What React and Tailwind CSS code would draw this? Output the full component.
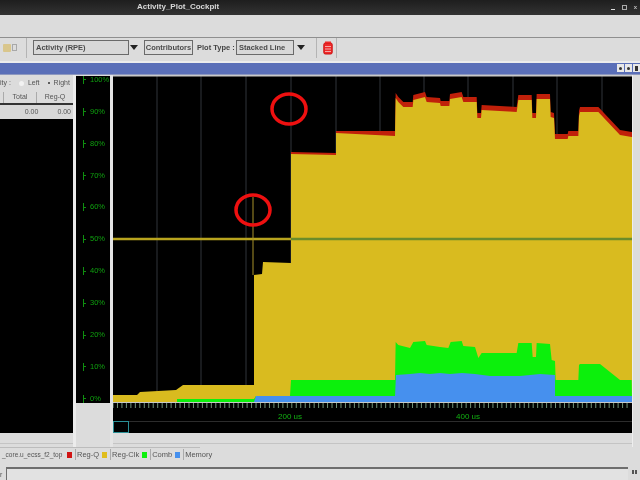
import { Fragment } from 'react'

const zx = (list) => list.map(([x, y]) => [380 + x / 3, y])

// stacked profiles, in page pixels so they can be read against the screenshot
const TOP = [
  [113, 396], [137, 396], [140, 393], [176, 391], [183, 386], [254, 386], [254, 276], [262, 275], [263, 263], [291, 262], [291, 153], [336, 154], [336, 132], [395, 132],
  ...zx([[47, 94], [55, 98], [70, 103], [98, 103], [100, 96], [135, 93], [140, 98], [180, 99], [182, 102], [208, 102], [210, 95], [245, 93], [250, 98], [290, 98], [292, 114], [303, 114], [305, 106], [410, 108], [415, 96], [455, 96], [457, 114], [468, 114], [470, 95], [510, 95], [512, 113], [522, 114], [525, 135], [563, 135], [565, 132], [595, 132], [597, 112], [600, 108], [655, 108], [720, 131], [755, 133]]),
  [632, 133],
]
const GREEN = [
  [177, 403], [177, 400], [254, 400], [256, 397], [290, 397], [291, 381], [395, 381],
  ...zx([[47, 343], [55, 346], [90, 349], [100, 343], [135, 342], [140, 346], [180, 348], [205, 349], [212, 343], [245, 342], [250, 347], [285, 348], [295, 359], [305, 354], [410, 354], [415, 344], [455, 344], [458, 358], [468, 358], [470, 344], [510, 345], [515, 361], [525, 362], [527, 381], [595, 381], [597, 366], [600, 365], [660, 365], [720, 381], [755, 381]]),
  [632, 403],
]
const BLUE = [
  [254, 403], [256, 397], [395, 397], [396, 376], [410, 375], [420, 374], [430, 375], [440, 374], [450, 375], [462, 374], [475, 375], [490, 377], [520, 377], [540, 375], [555, 376], [555, 397], [632, 397], [632, 403],
]

const pts = (list) => list.map((p) => p.join(',')).join(' ')
const closed = (list) => pts([...list, [list[list.length - 1][0], 403], [list[0][0], 403]])
// the red band is thin before the big step and thicker after it
const band = ([x, y]) => [x, y + (x < 291 ? 0 : x < 395 ? 2 : 5)]

const GRID = [157, 201, 246, 291, 336, 380, 424, 468, 513, 557, 602]
const PCT = ['100%', '90%', '80%', '70%', '60%', '50%', '40%', '30%', '20%', '10%', '0%']
const TICKS = Array.from({ length: 116 }, (_, i) => i * 4.47)

function Chart() {
  return (
    <svg viewBox="113 76 519 328" className="block h-[328px] w-[519px] bg-black">
      {GRID.map((x) => (
        <line key={x} x1={x} x2={x} y1="76" y2="403" stroke="#30343a" />
      ))}
      <polygon points={closed(TOP.slice(10))} fill="#c0200a" />
      <polygon points={closed(TOP.map(band))} fill="#d9bb1f" />
      <polygon points={closed(GREEN)} fill="#0cf00c" />
      <polygon points={pts(BLUE)} fill="#4690ee" />
      <line x1="113" x2="291" y1="240" y2="240" stroke="#b8a41e" strokeWidth="2.5" />
      <line x1="291" x2="632" y1="240" y2="240" stroke="#6b8c2a" strokeWidth="2.5" />
      <line x1="253" x2="253" y1="198" y2="276" stroke="#a8922a" />
      <ellipse cx="289" cy="110" rx="17" ry="15" fill="none" stroke="#ee1010" strokeWidth="3.5" />
      <ellipse cx="253" cy="211" rx="17" ry="15" fill="none" stroke="#ee1010" strokeWidth="3.5" />
      <rect x="113" y="76" width="519" height="1.5" fill="#c8c8c8" />
      <line x1="113" x2="632" y1="403.5" y2="403.5" stroke="#c8c8c8" />
    </svg>
  )
}

function TimeAxis() {
  return (
    <svg viewBox="0 0 519 30" className="block h-[30px] w-[519px] bg-black">
      {TICKS.map((x) => (
        <line key={x} x1={x} x2={x} y1="0" y2="5" stroke="#8fb898" strokeWidth="0.8" />
      ))}
      <line x1="0" x2="519" y1="18.5" y2="18.5" stroke="#2c2c2c" />
      <text x="177" y="16" textAnchor="middle" fontSize="8" fill="#12b012">200 us</text>
      <text x="355" y="16" textAnchor="middle" fontSize="8" fill="#12b012">400 us</text>
      <rect x="0.5" y="18.5" width="15" height="11" fill="none" stroke="#2a8f96" />
    </svg>
  )
}

function Combo({ label, width }) {
  return (
    <div className={`flex h-[15px] items-center border border-[#6a6a6a] bg-[#d8d8d8] pl-0.5 font-bold text-[#4a4a4a] ${width}`}>
      {label}
    </div>
  )
}

function Arrow() {
  return <div className="h-0 w-0 border-x-[4px] border-t-[5px] border-x-transparent border-t-[#222]" />
}

function Sep() {
  return <div className="h-[20px] w-px bg-[#b4b4b4]" />
}

function Toolbar() {
  return (
    <div className="flex h-[25px] items-center border-t border-[#8f8f8f] pb-[3px] text-[7.5px]">
      <div className="ml-[3px] flex w-[16px] items-center gap-px">
        <div className="h-[8px] w-[8px] rounded-[1px] bg-[#d9c68c]" />
        <div className="h-[7px] w-[5px] border border-[#a8a8a8]" />
      </div>
      <div className="ml-[7px]"><Sep /></div>
      <div className="ml-[6px]"><Combo label="Activity (RPE)" width="w-[96px]" /></div>
      <div className="ml-[1px]"><Arrow /></div>
      <div className="ml-[6px] flex h-[15px] w-[49px] items-center justify-center border border-[#6a6a6a] font-bold text-[#4a4a4a]">
        Contributors
      </div>
      <span className="ml-1 w-[39px] font-bold text-[#444]">Plot Type :</span>
      <Combo label="Stacked Line" width="w-[58px]" />
      <div className="ml-[3px]"><Arrow /></div>
      <div className="ml-[11px]"><Sep /></div>
      <svg viewBox="0 0 10 14" className="ml-[6px] h-[14px] w-[10px]">
        <rect x="0.8" y="2" width="8.4" height="11" rx="1.5" fill="#ee2a2a" stroke="#cc1111" />
        <rect x="2" y="0.5" width="6" height="1.5" fill="#ee2a2a" />
        <path d="M2 5.5h6M2 8h6M2 10.5h6" stroke="#f6c8c8" strokeWidth="0.8" />
      </svg>
      <div className="ml-[3px]"><Sep /></div>
    </div>
  )
}

function LeftPanel() {
  return (
    <div className="flex w-[76px] flex-col border-r-[3px] border-[#ececec] text-[7px] text-[#555]">
      <div className="flex h-[17px] items-center gap-1 overflow-hidden whitespace-nowrap">
        <span>ity :</span>
        <div className="ml-1 h-[5px] w-[5px] rounded-full bg-[#f2f2f2]" />
        <span>Left</span>
        <div className="ml-1 h-[2px] w-[2px] rounded-full bg-[#333]" />
        <span>Right</span>
      </div>
      <div className="flex h-[13px] items-center border-b-2 border-[#333]">
        <div className="h-full w-[4px] border-r border-[#aaa]" />
        <span className="w-[33px] border-r border-[#aaa] text-center">Total</span>
        <span className="flex-1 text-center">Reg-Q</span>
      </div>
      <div className="flex h-[14px] items-center justify-end gap-[19px] bg-[#d8d8d8] pr-0.5">
        <span>0.00</span>
        <span>0.00</span>
      </div>
      <div className="h-[314px] bg-black" />
      <div className="h-[11px] border-b border-[#c4c4c4]" />
    </div>
  )
}

function YAxis() {
  return (
    <div className="flex w-[37px] flex-col border-r-[3px] border-[#e4e4e4]">
      <div className="flex h-[328px] flex-col justify-between border-t border-[#dcdcdc] bg-black pl-[7px] text-[7.5px] leading-[8px] text-[#0fa00f]">
        {PCT.map((p) => (
          <div key={p} className="flex h-[8px] items-center border-l border-[#0f8f0f]">
            <div className="mr-[4px] h-px w-[2px] bg-[#0f8f0f]" />
            {p}
          </div>
        ))}
      </div>
    </div>
  )
}

const LEGEND = [
  ['bg-[#d01414]', 'Reg-Q'],
  ['bg-[#e0bd1c]', 'Reg-Clk'],
  ['bg-[#0cf00c]', 'Comb'],
  ['bg-[#4690ee]', 'Memory'],
]

function Legend() {
  return (
    <div className="flex h-[15px] w-[200px] items-center gap-[3px] border-t border-[#bcbcbc] text-[7.5px] whitespace-nowrap text-[#555]">
      <span className="ml-[2px] w-[62px] shrink-0 text-[6.5px]">_core.u_ecss_f2_top</span>
      {LEGEND.map(([color, label]) => (
        <Fragment key={label}>
          <div className={`h-[6px] w-[5px] shrink-0 ${color}`} />
          <span className="shrink-0 border-l border-[#aaa] pl-[1px]">{label}</span>
        </Fragment>
      ))}
    </div>
  )
}

function TitleButton({ dark }) {
  return (
    <div className="flex h-[8px] w-[7px] items-center justify-center bg-[#e8e8e8]">
      <div className={dark ? 'h-[5px] w-[3px] bg-[#333]' : 'h-[3px] w-[3px] rounded-full bg-[#333]'} />
    </div>
  )
}

export default function App() {
  return (
    <div className="flex h-[480px] w-[640px] flex-col overflow-hidden bg-[#dcdcdc] font-['Liberation_Sans',sans-serif] blur-[0.7px]">
      <div className="flex h-[15px] items-center bg-gradient-to-b from-[#1e1e1e] to-[#333] text-[8px] font-bold text-[#d8d8d8]">
        <span className="ml-[137px] flex-1">Activity_Plot_Cockpit</span>
        <div className="mr-[3px] flex items-center gap-[7px]">
          <div className="mt-1 h-px w-[4px] bg-[#ddd]" />
          <div className="h-[5px] w-[5px] border border-[#aaa]" />
          <span className="text-[6px] leading-none text-[#bbb]">x</span>
        </div>
      </div>
      <div className="h-[22px] shrink-0" />
      <Toolbar />
      <div className="h-[2px] shrink-0 bg-[#ececec]" />
      <div className="flex h-[12px] shrink-0 items-center justify-end gap-px border-b border-[#8d98c0] bg-[#5a6fb8]">
        <TitleButton />
        <TitleButton />
        <TitleButton dark />
      </div>
      <div className="flex h-[372px] shrink-0">
        <LeftPanel />
        <YAxis />
        <div className="flex w-[519px] flex-col">
          <Chart />
          <TimeAxis />
          <div className="h-[11px] border-b border-[#c4c4c4]" />
        </div>
        <div className="flex-1 border-l border-[#eee]" />
      </div>
      <Legend />
      <div className="mt-[5px] flex flex-1">
        <span className="w-[6px] pt-[3px] text-[7px] text-[#555]">r</span>
        <div className="w-[622px] border-t-2 border-l border-[#6e6e6e] bg-[#e2e2e2]" />
        <div className="ml-[4px] flex h-[10px] items-center gap-px">
          <div className="h-[4px] w-[2px] bg-[#555]" />
          <div className="h-[4px] w-[2px] bg-[#555]" />
        </div>
      </div>
    </div>
  )
}
